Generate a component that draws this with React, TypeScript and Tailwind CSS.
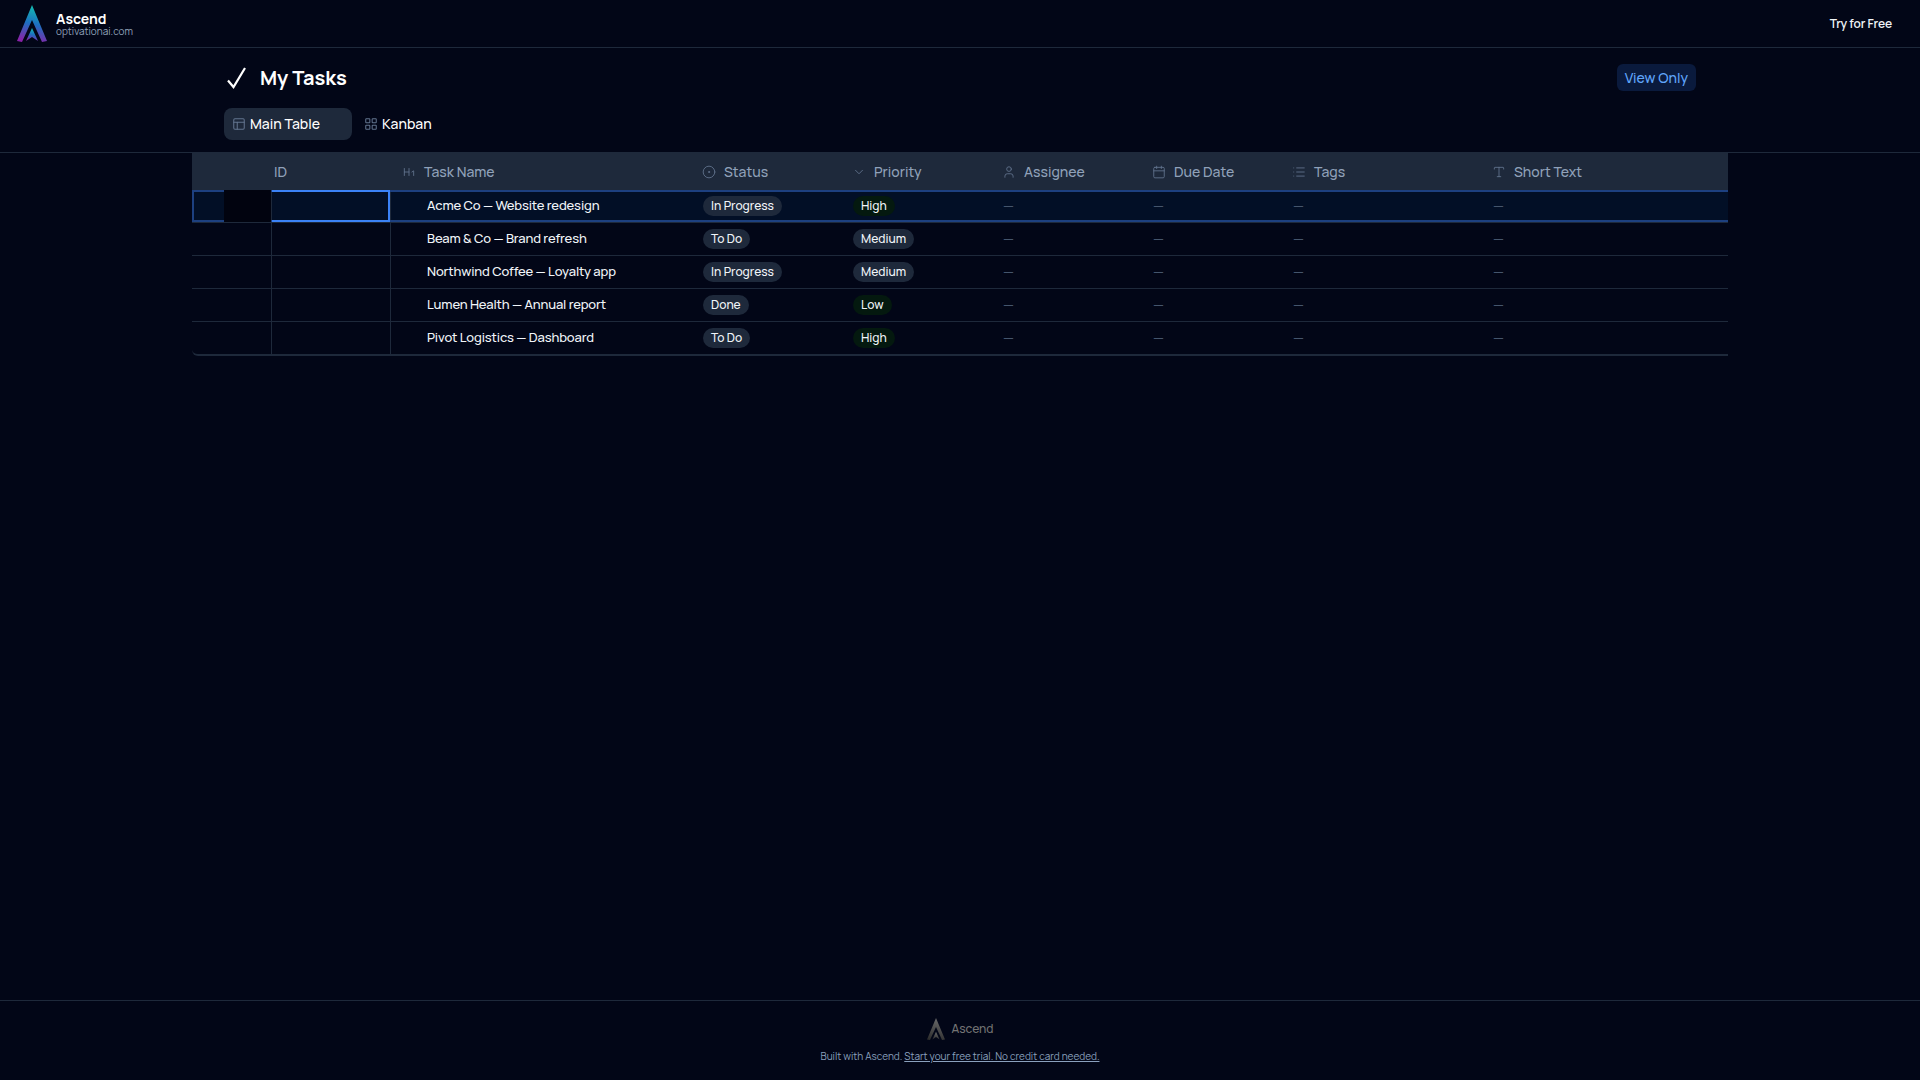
import { PanelsTopLeft, LayoutGrid, CircleDot, ChevronDown, User, Calendar, List, Type, Heading1 } from "lucide-react";

const font = "font-['Manrope','Inter','Noto_Sans',sans-serif]";

function Logo({ mono = false, id, className }: { mono?: boolean; id: string; className: string }) {
  return (
    <svg viewBox="0 0 30 37" className={className}>
      <defs>
        <linearGradient id={id} x1="0.6" y1="0" x2="0.4" y2="1">
          {mono ? <stop offset="0" stopColor="#6b6b6b" /> : <stop offset="0" stopColor="#12c2b0" />}
          {mono ? <stop offset="1" stopColor="#2e2e2e" /> : <stop offset="0.5" stopColor="#1d6fc0" />}
          {mono ? null : <stop offset="1" stopColor="#8a22a8" />}
        </linearGradient>
      </defs>
      <path d="M15 0 L30 36 L25 37 L15 15 L5 37 L0 36 Z" fill={`url(#${id})`} />
      <path d="M15 23 L21 36 L15 32 L9 36 Z" fill={`url(#${id})`} />
    </svg>
  );
}

const columns = [
  { label: "Task Name", Icon: Heading1, w: "w-[300px]" },
  { label: "Status", Icon: CircleDot, w: "w-[150px]" },
  { label: "Priority", Icon: ChevronDown, w: "w-[150px]" },
  { label: "Assignee", Icon: User, w: "w-[150px]" },
  { label: "Due Date", Icon: Calendar, w: "w-[140px]" },
  { label: "Tags", Icon: List, w: "w-[200px]" },
  { label: "Short Text", Icon: Type, w: "w-[247px]" },
];

const rows = [
  { name: "Acme Co — Website redesign", status: "In Progress", priority: "High" },
  { name: "Beam & Co — Brand refresh", status: "To Do", priority: "Medium" },
  { name: "Northwind Coffee — Loyalty app", status: "In Progress", priority: "Medium" },
  { name: "Lumen Health — Annual report", status: "Done", priority: "Low" },
  { name: "Pivot Logistics — Dashboard", status: "To Do", priority: "High" },
];

function Badge({ text, green }: { text: string; green?: boolean }) {
  return (
    <span className={`inline-flex h-5 items-center rounded-full px-2 text-xs font-medium text-slate-100 ${green ? "bg-[#04190f]" : "bg-[#1e293b]"}`}>
      {text}
    </span>
  );
}

function Dash() {
  return <span className="text-sm text-slate-600">—</span>;
}

function RowCells({ r }: { r: (typeof rows)[number] }) {
  return (
    <>
      <div className="flex w-[300px] items-center pl-9 text-[13px] font-medium tracking-[-0.01em] text-slate-100">{r.name}</div>
      <div className="flex w-[150px] items-center pl-3"><Badge text={r.status} /></div>
      <div className="flex w-[150px] items-center pl-3"><Badge text={r.priority} green={r.priority !== "Medium"} /></div>
      <div className="flex w-[150px] items-center pl-3"><Dash /></div>
      <div className="flex w-[140px] items-center pl-3"><Dash /></div>
      <div className="flex w-[200px] items-center pl-3"><Dash /></div>
      <div className="flex w-[247px] items-center pl-3"><Dash /></div>
    </>
  );
}

export default function App() {
  return (
    <div className={`flex min-h-screen flex-col bg-[#020617] text-white ${font}`}>
      <header className="flex h-12 items-center justify-between border-b border-[#1e293b] pl-[17px] pr-7">
        <div className="flex items-center gap-[9px]">
          <Logo id="logoTop" className="h-[37px] w-[30px]" />
          <div className="flex flex-col pt-[1px]">
            <span className="text-sm leading-[15px] font-bold">Ascend</span>
            <span className="text-[10px] leading-[11px] text-slate-400">optivationai.com</span>
          </div>
        </div>
        <span className="text-xs font-semibold tracking-[-0.01em] text-slate-100">Try for Free</span>
      </header>

      <div className="flex h-[105px] flex-col border-b border-[#1e293b] pl-[224px] pr-[224px]">
        <div className="mt-4 flex h-[27px] items-center justify-between">
          <div className="flex items-center gap-[12px]">
            <svg viewBox="0 0 22 24" className="ml-[2px] h-[24px] w-[22px] text-white" fill="none" stroke="currentColor" strokeWidth={2.2}>
              <path d="M2 14.5 L7.5 21 L19 2" />
            </svg>
            <h1 className="text-xl font-bold">My Tasks</h1>
          </div>
          <span className="flex h-[27px] items-center rounded-md bg-[#0a1a3d] px-2 text-sm font-medium text-[#60a5fa]">View Only</span>
        </div>
        <div className="mt-[17px] flex items-center">
          <div className="flex h-8 w-[128px] items-center gap-[4px] rounded-lg bg-[#1e293b] pl-[8px]">
            <PanelsTopLeft className="h-[14px] w-[14px] text-slate-500" strokeWidth={1.75} />
            <span className="text-sm font-medium">Main Table</span>
          </div>
          <div className="ml-[12px] flex items-center gap-[4px]">
            <LayoutGrid className="h-[14px] w-[14px] text-slate-500" strokeWidth={1.75} />
            <span className="text-sm font-medium">Kanban</span>
          </div>
        </div>
      </div>

      <main className="-mt-px flex-1 pl-[192px]">
        <div className="w-[1536px] overflow-hidden rounded-bl-md border-b-2 border-[#1e293b]">
          <div className="flex h-[38px] items-center bg-[#1e293b] pt-[2px] text-sm font-medium text-slate-400">
            <div className="w-[80px]" />
            <div className="w-[119px] pl-[2px]">ID</div>
            {columns.map(({ label, Icon, w }) => (
              <div key={label} className={`flex items-center gap-2 pl-[11px] ${w}`}>
                <Icon className="h-[14px] w-[14px] shrink-0 text-slate-500" strokeWidth={1.5} />
                <span>{label}</span>
              </div>
            ))}
          </div>

          <div className="h-[33px] border-b border-[#1e293b]">
            <div className="flex h-[32px] items-stretch border-y-2 border-l-2 border-[#1d4080] bg-[#020f26]">
              <div className="flex w-[78px] border-r border-[#1e293b]">
                <div className="-my-[2px] ml-[30px] w-[47px] bg-[#01030f]" />
              </div>
              <div className="-my-[2px] w-[118px] border-y-2 border-r-2 border-[#3b82f6] bg-[#020f26]" />
              <div className="w-px bg-[#1e293b]" />
              <RowCells r={rows[0]} />
            </div>
          </div>

          {rows.slice(1).map((r, i) => (
            <div key={r.name} className={`flex items-stretch ${i === 3 ? "h-[32px]" : "h-[33px] border-b border-[#1e293b]"}`}>
              <div className="w-[80px] border-r border-[#1e293b]" />
              <div className="w-[119px] border-r border-[#1e293b]" />
              <RowCells r={r} />
            </div>
          ))}
        </div>
      </main>

      <footer className="flex h-20 flex-col items-center border-t border-[#1e293b] pt-4">
        <div className="flex h-[24px] items-center gap-[7px]">
          <Logo mono id="logoFoot" className="h-[24px] w-[18px]" />
          <span className="text-xs font-medium text-[#737373]">Ascend</span>
        </div>
        <p className="mt-[7px] text-[10px] leading-[16px] text-[#8aa0bd]">
          Built with Ascend. <span className="underline">Start your free trial. No credit card needed.</span>
        </p>
      </footer>
    </div>
  );
}
